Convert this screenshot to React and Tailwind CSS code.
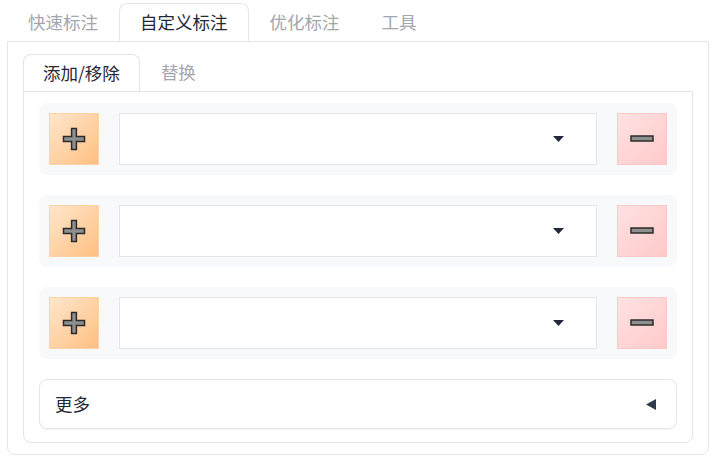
import React from "react";

const font = { fontFamily: '"Noto Sans CJK SC", "Noto Sans", sans-serif' };

function PlusIcon() {
  return (
    <svg width="24" height="24" viewBox="0 0 24 24">
      <path
        d="M9.6 1.5h4.8v8.1h8.1v4.8h-8.1v8.1H9.6v-8.1H1.5V9.6h8.1z"
        fill="#8f8f8f"
        stroke="#2b2b2b"
        strokeWidth="1.5"
        strokeLinejoin="miter"
      />
    </svg>
  );
}

function MinusIcon() {
  return (
    <svg width="24" height="8" viewBox="0 0 24 8">
      <rect x="1" y="1" width="22" height="5" fill="#8f8f8f" stroke="#2b2b2b" strokeWidth="1.5" />
    </svg>
  );
}

function Row() {
  return (
    <div className="flex items-center gap-[20px] rounded-lg bg-[#f8f9fb] p-[10px]">
      <button className="flex h-[52px] w-[50px] items-center justify-center border border-[#ffd2a6] bg-gradient-to-br from-[#ffe6cc] to-[#ffbf80]">
        <PlusIcon />
      </button>
      <div className="flex h-[52px] flex-1 items-center justify-end border border-[#e3e5e9] bg-white pr-[32px]">
        <svg width="11" height="6" viewBox="0 0 11 6">
          <path d="M0 0h11L5.5 6z" fill="#1f2937" />
        </svg>
      </div>
      <button className="flex h-[52px] w-[50px] items-center justify-center border border-[#ffc8c8] bg-gradient-to-br from-[#ffe2e2] to-[#ffc9c9]">
        <MinusIcon />
      </button>
    </div>
  );
}

export default function App() {
  const outerTabs = ["快速标注", "自定义标注", "优化标注", "工具"];
  const innerTabs = ["添加/移除", "替换"];
  return (
    <div className="h-[462px] w-[713px] bg-white pt-[3px]" style={font}>
      <div className="ml-[7px] w-[702px]">
        <div className="flex">
          {outerTabs.map((t, i) => (
            <div
              key={t}
              className={
                i === 1
                  ? "relative z-10 -mb-px flex h-[38px] items-center rounded-t-lg border border-b-0 border-[#e3e5e9] bg-white px-[20px] text-[17.5px] text-[#1f2937]"
                  : "flex h-[38px] items-center border border-transparent px-[20px] text-[17.5px] text-[#a3a6ad]"
              }
            >
              {t}
            </div>
          ))}
        </div>
        <div className="rounded-b-lg rounded-tr-none border border-[#e3e5e9] px-[15px] pb-[11px] pt-[12px]">
          <div className="flex">
            {innerTabs.map((t, i) => (
              <div
                key={t}
                className={
                  i === 0
                    ? "relative z-10 -mb-px flex h-[37px] items-center rounded-t-lg border border-b-0 border-[#e3e5e9] bg-white px-[19px] text-[17.5px] text-[#1f2937]"
                    : "flex h-[37px] items-center border border-transparent px-[20px] text-[17.5px] text-[#a3a6ad]"
                }
              >
                {t}
              </div>
            ))}
          </div>
          <div className="flex flex-col gap-[20px] rounded-b-lg rounded-tr-none border border-[#e3e5e9] px-[15px] pb-[13px] pt-[11px]">
            <Row />
            <Row />
            <Row />
            <div className="flex h-[50px] items-center justify-between rounded-lg border border-[#e3e5e9] bg-white pl-[15px] pr-[20px] shadow-[0_1px_1px_rgba(0,0,0,0.04)]">
              <span className="text-[17.5px] text-[#1f2937]">更多</span>
              <svg width="10" height="11" viewBox="0 0 10 11">
                <path d="M10 0v11L0 5.5z" fill="#2f3a4a" />
              </svg>
            </div>
          </div>
        </div>
      </div>
    </div>
  );
}
